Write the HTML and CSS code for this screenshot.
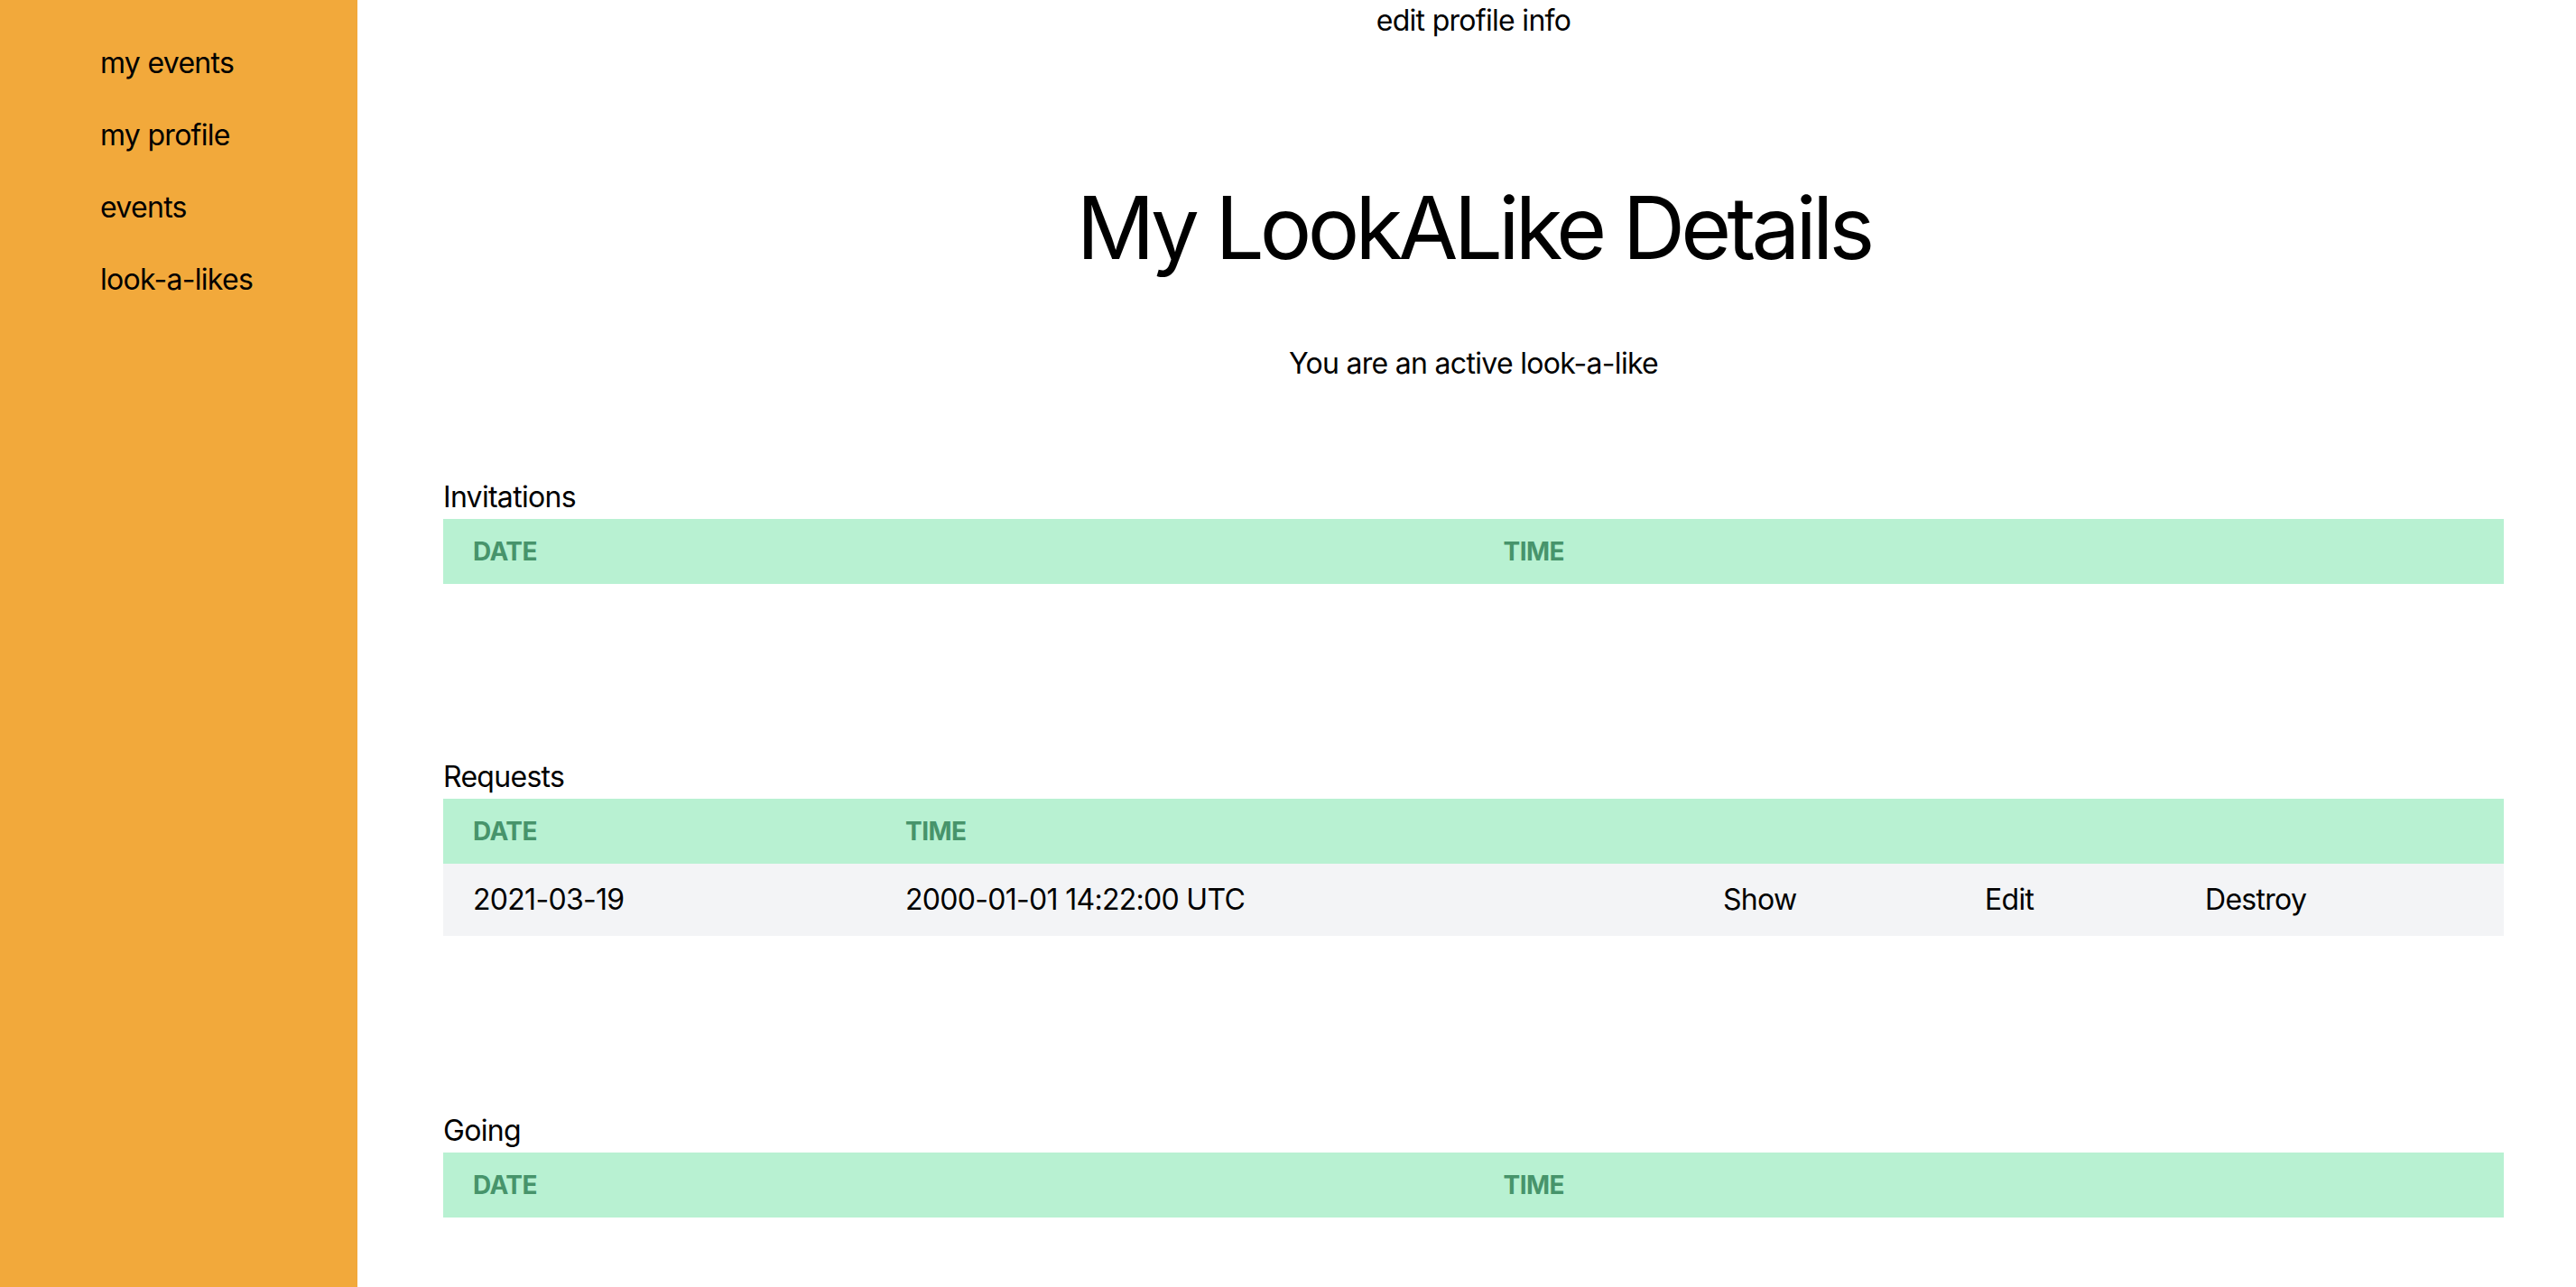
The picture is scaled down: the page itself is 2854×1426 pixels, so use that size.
FILE: index.html
```html
<!DOCTYPE html>
<html lang="en">
<head>
<meta charset="utf-8">
<title>My LookALike Details</title>
<link rel="stylesheet" href="styles.css">
</head>
<body>
<div class="layout">
  <nav class="sidebar">
    <a class="nav-link" href="#">my events</a>
    <a class="nav-link" href="#">my profile</a>
    <a class="nav-link" href="#">events</a>
    <a class="nav-link" href="#">look-a-likes</a>
  </nav>
  <main class="main">
    <div class="intro">
      <a class="edit-link" href="#">edit profile info</a>
      <h1 class="title">My LookALike Details</h1>
      <p class="status">You are an active look-a-like</p>
    </div>

    <section class="section">
      <h2 class="section-label">Invitations</h2>
      <table class="data-table two-col">
        <thead>
          <tr><th>Date</th><th>Time</th></tr>
        </thead>
        <tbody></tbody>
      </table>
    </section>

    <section class="section">
      <h2 class="section-label">Requests</h2>
      <table class="data-table five-col">
        <colgroup>
          <col class="c-date"><col class="c-time"><col class="c-show"><col class="c-edit"><col class="c-destroy">
        </colgroup>
        <thead>
          <tr><th>Date</th><th>Time</th><th></th><th></th><th></th></tr>
        </thead>
        <tbody>
          <tr>
            <td>2021-03-19</td>
            <td>2000-01-01 14:22:00 UTC</td>
            <td><a href="#">Show</a></td>
            <td><a href="#">Edit</a></td>
            <td><a href="#">Destroy</a></td>
          </tr>
        </tbody>
      </table>
    </section>

    <section class="section section-last">
      <h2 class="section-label">Going</h2>
      <table class="data-table two-col">
        <thead>
          <tr><th>Date</th><th>Time</th></tr>
        </thead>
        <tbody></tbody>
      </table>
    </section>
  </main>
</div>
</body>
</html>
```
FILE: styles.css
```css
* { box-sizing: border-box; }
html, body { margin: 0; padding: 0; }
body {
  font-family: Inter, "Liberation Sans", sans-serif;
  font-size: 32px;
  line-height: 48px;
  letter-spacing: -0.022em;
  color: #000;
  background: #fff;
}
a { color: inherit; text-decoration: none; }

.layout {
  display: flex;
  min-height: 1426px;
}

.sidebar {
  width: 396px;
  flex: 0 0 396px;
  background: #f2a93b;
  display: flex;
  flex-direction: column;
  gap: 32px;
  padding: 46px 0 0 111px;
}
.nav-link { display: block; line-height: 48px; }

.main {
  flex: 1;
  padding: 0 80px 0 95px;
}

.intro {
  text-align: center;
  display: flex;
  flex-direction: column;
  align-items: center;
}
.edit-link { display: block; line-height: 48px; margin-top: -1px; }
.title {
  margin: 157px 0 0;
  font-size: 96px;
  line-height: 96px;
  font-weight: 400;
  letter-spacing: -0.05em;
}
.status { margin: 79px 0 0; }

.section { margin-top: 100px; }
.section + .section { margin-top: 190px; }
.section.section-last { margin-top: 192px; }

.section-label {
  margin: 0;
  font-size: 32px;
  line-height: 48px;
  font-weight: 400;
}

.data-table {
  width: 100%;
  border-collapse: collapse;
  table-layout: fixed;
}
.data-table th {
  background: #b8f1d2;
  color: #47946b;
  font-size: 28px;
  line-height: 40px;
  font-weight: 700;
  text-transform: uppercase;
  letter-spacing: -0.02em;
  text-align: left;
  padding: 16px 33px;
}
.data-table td {
  background: #f3f4f6;
  padding: 16px 33px;
  line-height: 48px;
  white-space: nowrap;
}
.two-col th { width: 50%; }
.c-date { width: 479px; }
.c-time { width: 906px; }
.c-show { width: 290px; }
.c-edit { width: 244px; }
```
